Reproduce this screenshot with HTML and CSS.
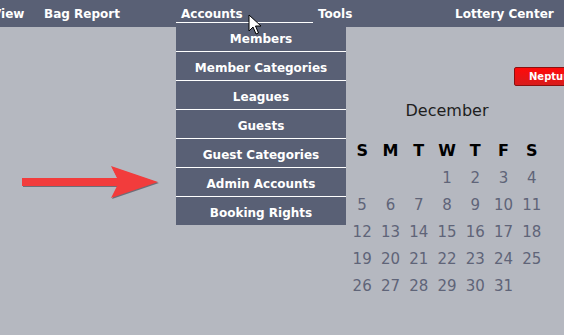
FILE: index.html
```html
<!DOCTYPE html>
<html lang="en">
<head>
    <meta charset="UTF-8">
    <title>Accounts</title>
    <link rel="stylesheet" href="styles.css">
</head>
<body>

    <nav class="topbar">
        <a class="nav-item nav-item-first">View</a>
        <a class="nav-item">Bag Report</a>
        <a class="nav-item active">Accounts</a>
        <a class="nav-item">Tools</a>
        <a class="nav-item">Lottery Center</a>
    </nav>

    <ul class="dropdown">
        <li>Members</li>
        <li>Member Categories</li>
        <li>Leagues</li>
        <li>Guests</li>
        <li>Guest Categories</li>
        <li>Admin Accounts</li>
        <li>Booking Rights</li>
    </ul>

    <main class="content">
        <button class="neptune-btn">Neptune</button>

        <div class="calendar">
            <div class="month">December</div>
            <div class="days">
                <span class="dow">S</span><span class="dow">M</span><span class="dow">T</span><span class="dow">W</span><span class="dow">T</span><span class="dow">F</span><span class="dow">S</span>
                <span></span><span></span><span></span><span>1</span><span>2</span><span>3</span><span>4</span>
                <span>5</span><span>6</span><span>7</span><span>8</span><span>9</span><span>10</span><span>11</span>
                <span>12</span><span>13</span><span>14</span><span>15</span><span>16</span><span>17</span><span>18</span>
                <span>19</span><span>20</span><span>21</span><span>22</span><span>23</span><span>24</span><span>25</span>
                <span>26</span><span>27</span><span>28</span><span>29</span><span>30</span><span>31</span><span></span>
            </div>
        </div>
    </main>

    <!-- annotation arrow pointing at Admin Accounts -->
    <svg class="annotation-arrow" width="150" height="40" viewBox="0 0 150 40">
        <path d="M2 14 H97 L91 2 L138 18 L91 34 L97 22 H2 Z" fill="#6e6e78" transform="translate(1,1)"/>
        <path d="M2 14 H97 L91 2 L138 18 L91 34 L97 22 H2 Z" fill="#f23c3c"/>
    </svg>

    <svg class="cursor" width="14" height="22" viewBox="0 0 14 22">
        <path d="M1 1 V17 L5 13 L8 20 L10.5 19 L7.5 12 H13 Z" fill="#fff" stroke="#000" stroke-width="1" stroke-linejoin="miter"/>
    </svg>

</body>
</html>
```

FILE: styles.css
```css
:root {
    --bar-color: #596075;
    --page-color: #b5b8c0;
    --day-color: #5f6478;
}

* {
    box-sizing: border-box;
    margin: 0;
    padding: 0;
}

body {
    font-family: 'DejaVu Sans', Verdana, sans-serif;
    background-color: var(--page-color);
    width: 564px;
    height: 335px;
    overflow: hidden;
    position: relative;
}

.topbar {
    display: flex;
    height: 27px;
    background-color: var(--bar-color);
    white-space: nowrap;
}

.nav-item {
    flex: 0 0 137px;
    height: 23px;
    padding: 7px 0 0 5px;
    color: #fff;
    font-size: 12px;
    font-weight: bold;
}

.nav-item-first {
    flex-basis: 47px;
    margin-left: -8px;
    padding-left: 0;
}

.nav-item.active {
    border-bottom: 1px solid #fff;
}

.dropdown {
    position: absolute;
    left: 176px;
    top: 23px;
    width: 170px;
    list-style: none;
    background-color: var(--bar-color);
}

.dropdown li {
    height: 29px;
    padding-top: 4px;
    line-height: 24px;
    border-bottom: 1px solid #fff;
    text-align: center;
    color: #fff;
    font-size: 12px;
    font-weight: bold;
}

.dropdown li:last-child {
    border-bottom: none;
    height: 28px;
}

.content {
    padding-top: 40px;
}

.neptune-btn {
    display: block;
    margin-left: 514px;
    width: 80px;
    height: 19px;
    padding-left: 14px;
    text-align: left;
    background: linear-gradient(#ff0a0a, #d81c1c);
    border: 1px solid #8a1010;
    border-radius: 2px;
    color: #fff;
    font-family: 'DejaVu Sans', Verdana, sans-serif;
    font-size: 10px;
    font-weight: bold;
}

.calendar {
    margin: 15px 0 0 348px;
    width: 198px;
}

.month {
    text-align: center;
    font-size: 16px;
    color: #1e1e1e;
    line-height: 20px;
}

.days {
    display: grid;
    grid-template-columns: repeat(7, 1fr);
    grid-auto-rows: 27px;
    margin-top: 16px;
    text-align: center;
    font-size: 15px;
    color: var(--day-color);
}

.days span {
    padding-top: 2px;
    line-height: 25px;
}

.days .dow {
    padding-top: 0;
    line-height: 27px;
    font-weight: bold;
    font-size: 16px;
    color: #000;
}

.annotation-arrow {
    position: absolute;
    left: 20px;
    top: 164px;
}

.cursor {
    position: absolute;
    left: 248px;
    top: 14px;
}
```
